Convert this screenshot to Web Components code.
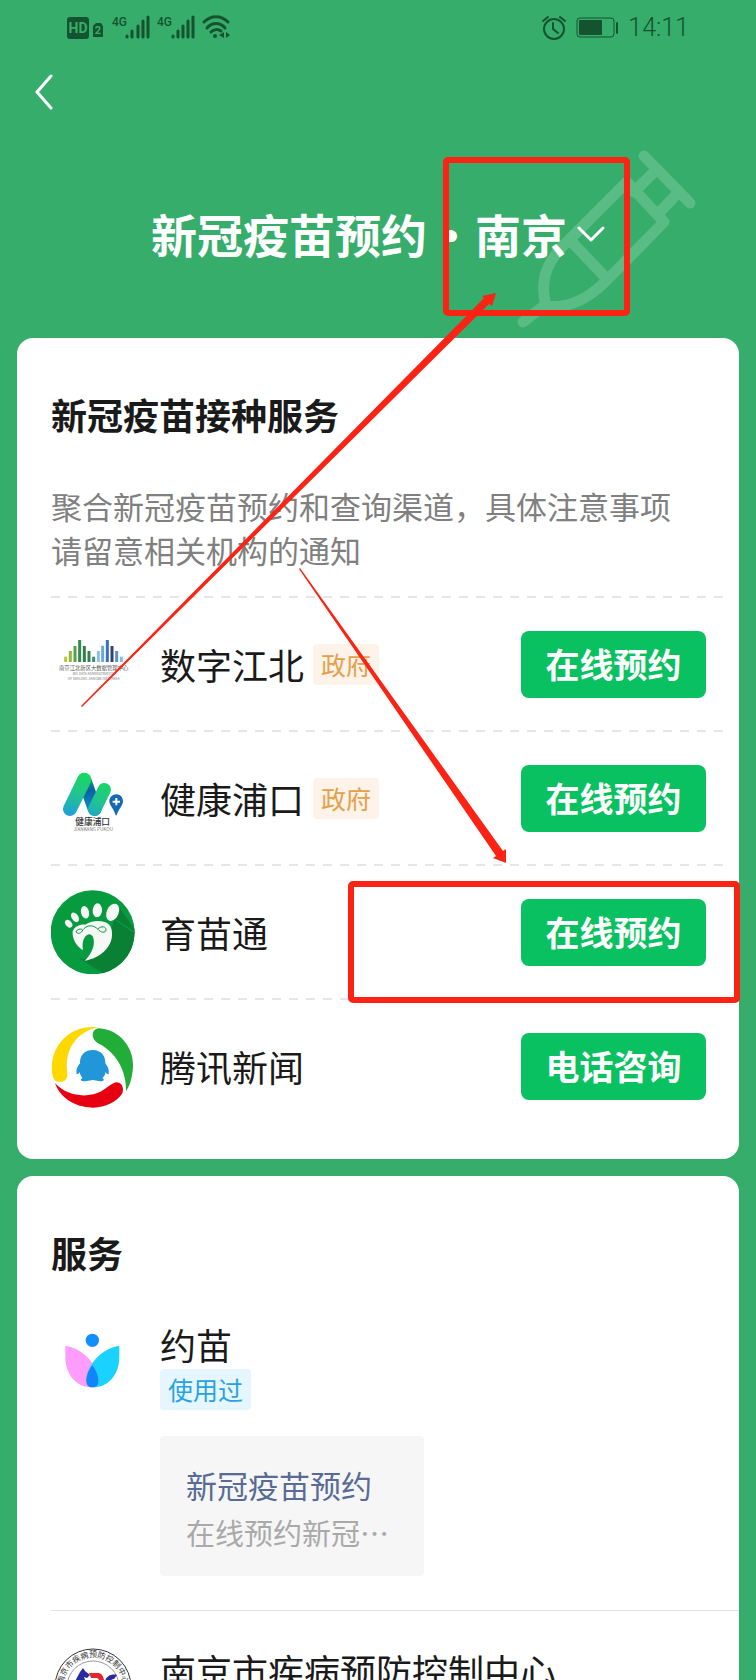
<!DOCTYPE html>
<html lang="zh-CN">
<head>
<meta charset="utf-8">
<meta name="viewport" content="width=device-width, initial-scale=1">
<title>新冠疫苗预约</title>
<style>
    body {
        margin: 0;
        background: #36ad6a;
        color: #1a1a1a;
        font-family: "Noto Sans CJK SC", "Noto Sans", sans-serif;
    }
</style>
</head>
<body>

<vaccine-app>
    <status-bar></status-bar>
    <page-header city="南京">新冠疫苗预约</page-header>

    <service-card heading="新冠疫苗接种服务">
        <p slot="intro">聚合新冠疫苗预约和查询渠道，具体注意事项请留意相关机构的通知</p>
        <booking-row name="数字江北" tag="政府" action="在线预约">
            <svg viewBox="63 66 252 252" aria-hidden="true">
                <g stroke-width="9">
                    <path stroke="#b5c934" d="M107 186V170"/>
                    <path stroke="#8dbb3c" d="M121 186V153"/>
                    <path stroke="#55a345" d="M135 186V138"/>
                    <path stroke="#35894a" d="M149 186V120"/>
                    <path stroke="#2f7d48" d="M163 186V138"/>
                    <path stroke="#36814a" d="M177 186V153"/>
                    <path stroke="#3c8f7b" d="M191 186V170"/>
                    <path stroke="#8cc0e6" d="M205 186V153"/>
                    <path stroke="#6ba9dc" d="M218 186V137"/>
                    <path stroke="#3b6fb5" d="M232 186V120"/>
                    <path stroke="#34416f" d="M246 186V138"/>
                    <path stroke="#5f8fc6" d="M260 186V153"/>
                    <path stroke="#86bce4" d="M274 186V170"/>
                </g>
                <g text-anchor="middle" fill="#555">
                    <text x="191" y="210" font-size="16">南京江北新区大数据管理中心</text>
                    <text x="191" y="226" font-size="10" fill="#777">BIG DATA ADMINISTRATION</text>
                    <text x="191" y="240" font-size="10" fill="#777">OF NANJING JIANGBEI NEW AREA</text>
                </g>
            </svg>
        </booking-row>
        <booking-row name="健康浦口" tag="政府" action="在线预约">
            <svg viewBox="63 48 252 252" aria-hidden="true">
                <defs>
                    <linearGradient id="leg" gradientUnits="userSpaceOnUse" x1="162" y1="98" x2="120" y2="228">
                        <stop offset="0" stop-color="#16d860"/>
                        <stop offset=".5" stop-color="#22c48e"/>
                        <stop offset="1" stop-color="#1d9fdc"/>
                    </linearGradient>
                    <linearGradient id="mid" gradientUnits="userSpaceOnUse" x1="165" y1="110" x2="190" y2="220">
                        <stop offset="0" stop-color="#12a070"/>
                        <stop offset=".4" stop-color="#0b62a4"/>
                        <stop offset="1" stop-color="#1796d4"/>
                    </linearGradient>
                </defs>
                <g fill="none" stroke-linecap="round">
                    <path d="M163 120L194 207" stroke="url(#mid)" stroke-width="42"/>
                    <path d="M163 119L120 207" stroke="url(#leg)" stroke-width="42"/>
                    <path d="M223 149L194 208" stroke="url(#leg)" stroke-width="40"/>
                </g>
                <path d="M259 163C271 163 279 172 279 184C279 196 266 207 260 226H257C252 207 238 196 238 184C238 172 247 163 259 163Z" fill="#1468b4"/>
                <path d="M259 174V196M248 185H270" stroke="#fff" stroke-width="6"/>
                <text x="188" y="256" font-size="26" font-weight="500" text-anchor="middle" fill="#333">健康浦口</text>
                <text x="190" y="274" font-size="14" text-anchor="middle" fill="#777">JIANKANG PUKOU</text>
            </svg>
        </booking-row>
        <booking-row name="育苗通" action="在线预约">
            <svg viewBox="63 60 252 252" aria-hidden="true">
                <circle cx="188" cy="187" r="126" fill="#079b40"/>
                <path d="M266 110L313 176A126 126 0 0 1 217 310L148 264L168 268L246 170Z" fill="#0a8034"/>
                <path d="M258 150L314 188" stroke="#079b40" stroke-width="4"/>
                <g fill="#f6f8f6">
                    <ellipse cx="248" cy="127" rx="18" ry="27" transform="rotate(24 248 127)"/>
                    <ellipse cx="202" cy="121" rx="14" ry="21" transform="rotate(4 202 121)"/>
                    <ellipse cx="165" cy="127" rx="12" ry="19" transform="rotate(-14 165 127)"/>
                    <ellipse cx="135" cy="142" rx="10" ry="16" transform="rotate(-32 135 142)"/>
                    <ellipse cx="116" cy="161" rx="9" ry="13" transform="rotate(-42 116 161)"/>
                    <path d="M128 184C134 168 152 162 166 164C182 152 206 150 224 156C240 161 247 174 246 194C246 230 212 264 164 272C186 250 196 226 190 204C186 192 178 190 170 196C158 206 156 224 159 241C138 228 126 206 128 184Z"/>
                </g>
                <g fill="none" stroke="#079b40" stroke-width="3">
                    <path d="M138 186C140 177 154 175 158 180C155 190 142 193 138 186ZM160 178C174 162 192 166 204 178C212 188 227 190 228 180C228 168 214 168 204 176"/>
                </g>
            </svg>
        </booking-row>
        <booking-row name="腾讯新闻" action="电话咨询">
            <svg viewBox="63 462 252 252" aria-hidden="true">
                <path d="M204 472C124 462 60 524 66 604C67 626 74 636 90 636C106 636 113 626 112 610C102 548 134 486 204 472Z" fill="#ffd800"/>
                <path d="M206 475C270 478 312 535 309 590C307 625 298 650 288 663C290 608 262 550 208 522C180 508 184 477 206 475Z" fill="#22ac38"/>
                <path d="M75 640C95 695 150 713 190 713C225 713 262 695 277 670C284 650 272 636 258 637C240 640 225 665 190 673C150 682 105 672 75 640Z" fill="#e60012"/>
                <path d="M188 540C216 540 227 560 226 580C234 590 238 600 236 612C232 614 229 610 227 606C226 615 222 620 217 624C226 629 220 635 210 634L189 630L165 634C152 634 148 629 158 624C152 618 150 612 149 606C146 612 142 614 140 612C137 600 142 590 150 580C149 558 162 540 188 540Z" fill="#2196d9"/>
            </svg>
        </booking-row>
    </service-card>

    <service-card heading="服务">
        <agency-row name="约苗" tag="使用过">
            <svg slot="icon" viewBox="63 327 252 252" aria-hidden="true">
                <circle cx="187" cy="391" r="20" fill="#128fff"/>
                <path d="M106 407C150 415 188 445 203 492C208 516 200 532 186 532C140 532 106 495 106 440Z" fill="#ff9dff"/>
                <path d="M268 407C224 415 186 445 171 492C166 516 174 532 188 532C234 532 268 495 268 440Z" fill="#1ad2ff"/>
                <path d="M187 466C197 480 205 495 205 512C205 526 198 532 187 532C176 532 169 526 169 512C169 495 177 480 187 466Z" fill="#1384fb"/>
            </svg>
            <quick-link href="#booking" label="新冠疫苗预约">在线预约新冠…</quick-link>
        </agency-row>
        <agency-row name="南京市疾病预防控制中心">
            <svg slot="icon" viewBox="0 0 84 84" aria-hidden="true">
                <circle cx="42" cy="42" r="38" fill="#fff" stroke="#333" stroke-width="1"/>
                <circle cx="42" cy="42" r="26" fill="none" stroke="#999" stroke-width="1"/>
                <path id="ring" d="M13 50A30 30 0 1 1 71 50" fill="none"/>
                <text font-size="8" fill="#333" text-anchor="middle"><textPath href="#ring" startOffset="50%">南京市疾病预防控制中心</textPath></text>
                <path d="M20 44L29 27L32 23L34 26L39 30L36 33L33 32L36 40L44 44L40 50L34 46L28 54L24 52L27 44L22 48Z" fill="#2a2aa0"/>
                <path d="M38 28H48C55 30 55 44 47 46H40L42 41H46C49 39 49 34 46 33H40Z" fill="#e5262c"/>
                <path d="M66 30C58 28 52 34 54 42C56 46 62 46 66 43L63 39C58 41 58 34 63 34Z" fill="#2a2aa0"/>
            </svg>
        </agency-row>
    </service-card>

    <callout-layer></callout-layer>
</vaccine-app>

<script>
// Attach an open root and fill it from a markup string
function render(el, html) {
    const template = document.createElement('template');
    template.innerHTML = html;
    el.attachShadow({ mode: 'open' }).appendChild(template.content.cloneNode(true));
}

class VaccineApp extends HTMLElement {
    constructor() {
        super();
        render(this, `
            <style>
                :host {
                    display: block;
                    position: relative;
                    height: 100vh;
                    overflow: hidden auto;
                    scrollbar-width: none;
                }
                main {
                    display: flex;
                    flex-direction: column;
                }
            </style>
            <main><slot></slot></main>
        `);
    }
}

class StatusBar extends HTMLElement {
    constructor() {
        super();
        render(this, `
            <style>
                :host {
                    display: flex;
                    justify-content: space-between;
                    align-items: center;
                    height: 56px;
                    padding: 0 67px 0 66px;
                    color: #14532f;
                }
                svg {
                    display: block;
                    fill: currentColor;
                }
                div {
                    display: flex;
                    align-items: center;
                    gap: 10px;
                }
                time {
                    font: 300 25px/30px Roboto, sans-serif;
                }
            </style>
            <svg width="166" height="26" viewBox="66 15 166 26" font-family="Roboto, sans-serif">
                <rect x="67" y="17" width="22" height="22" rx="3"/>
                <text x="78" y="33" font-size="14" font-weight="700" text-anchor="middle" fill="#36ad6a">HD</text>
                <path d="M96 23H101L103 26V37H93V26Z"/>
                <text x="98" y="34" font-size="11" font-weight="700" text-anchor="middle" fill="#36ad6a">2</text>
                <text x="112" y="26" font-size="12" font-weight="500">4G</text>
                <text x="157" y="26" font-size="12" font-weight="500">4G</text>
                <g fill="none" stroke="currentColor" stroke-width="3" stroke-linecap="round">
                    <path d="M127 36V37M132 31V37M138 26V37M143 21V37M148 17V37"/>
                    <path d="M173 36V37M178 31V37M183 26V37M188 21V37M193 17V37"/>
                    <path d="M204 22C211 15 221 15 228 22M207 28C212 22 220 22 225 28M211 32C214 29 218 29 221 31"/>
                </g>
                <circle cx="215" cy="36" r="2"/>
                <path d="M224 32V38L219 35ZM226 32V38L230 35Z"/>
            </svg>
            <div>
                <svg width="76" height="26" viewBox="542 15 76 26">
                    <g fill="none" stroke="currentColor" stroke-width="2">
                        <circle cx="554" cy="29" r="10"/>
                        <path d="M553 23V29L558 33M543 21L548 17M565 21L560 17" stroke-linecap="round"/>
                        <rect x="577" y="18" width="37" height="19" rx="3" stroke-width="1"/>
                    </g>
                    <rect x="579" y="20" width="23" height="15" rx="1"/>
                    <rect x="616" y="22" width="2" height="12" rx="1"/>
                </svg>
                <time>14:11</time>
            </div>
        `);
    }
}

class PageHeader extends HTMLElement {
    constructor() {
        super();
        render(this, `
            <style>
                :host {
                    display: block;
                    position: relative;
                    height: 282px;
                    color: #fff;
                }
                button {
                    border: 0;
                    padding: 0;
                    background: none;
                    color: inherit;
                    font: inherit;
                    cursor: pointer;
                }
                .back {
                    display: block;
                    margin-left: 25px;
                    padding: 17px 10px;
                }
                svg {
                    display: block;
                    fill: none;
                    stroke: currentColor;
                    stroke-linecap: round;
                    stroke-linejoin: round;
                }
                .syringe {
                    position: absolute;
                    top: 93px;
                    right: 58px;
                    opacity: .18;
                }
                h1 {
                    position: relative;
                    display: flex;
                    justify-content: center;
                    margin: 73px 0 0;
                    font-size: 46px;
                    line-height: 64px;
                    font-weight: 700;
                }
                i {
                    width: 48px;
                    font-style: normal;
                    text-align: center;
                }
                .city {
                    display: flex;
                    align-items: center;
                    gap: 10px;
                }
            </style>
            <svg class="syringe" width="182" height="184" viewBox="516 148 182 184" stroke-width="11">
                <path d="M644 155L690 202M652 173L634 191M676 194L659 212M627 181L664 221L606 280C588 298 568 308 546 305C540 282 544 262 568 240L627 181M570 239L606 277M545 304L523 321"/>
            </svg>
            <button class="back" aria-label="返回">
                <svg width="18" height="38" viewBox="0 0 18 38" stroke-width="3"><path d="M16 3L2 19L16 35"/></svg>
            </button>
            <h1>
                <slot></slot><i>·</i>
                <button class="city">
                    <span></span>
                    <svg width="28" height="22" viewBox="0 0 28 22" stroke-width="3"><path d="M2 6L14 18L26 6"/></svg>
                </button>
            </h1>
        `);
        this.shadowRoot.querySelector('.city span').textContent = this.getAttribute('city');
    }
}

class ServiceCard extends HTMLElement {
    constructor() {
        super();
        render(this, `
            <style>
                :host {
                    display: block;
                    margin: 0 17px 17px;
                    padding: 50px 0 27px 34px;
                    border-radius: 16px;
                    background: #fff;
                }
                h2 {
                    margin: 0 0 7px;
                    font-size: 36px;
                    line-height: 52px;
                    font-weight: 700;
                }
                ::slotted(p) {
                    margin: 44px 42px 24px 0;
                    color: #808080;
                    font-size: 31px;
                    line-height: 44px;
                }
            </style>
            <h2></h2>
            <slot name="intro"></slot>
            <slot></slot>
        `);
        this.shadowRoot.querySelector('h2').textContent = this.getAttribute('heading');
    }
}

class InfoTag extends HTMLElement {
    constructor() {
        super();
        render(this, `
            <style>
                :host {
                    display: block;
                    width: fit-content;
                    padding: 0 8px;
                    border-radius: 4px;
                    background: #fdf3e8;
                    color: #e5a04c;
                    font-size: 25px;
                    line-height: 41px;
                }
                :host([kind="used"]) {
                    background: #e6f6fe;
                    color: #27a3e2;
                }
            </style>
            <slot></slot>
        `);
    }
}

class BookingRow extends HTMLElement {
    constructor() {
        super();
        render(this, `
            <style>
                :host {
                    display: flex;
                    align-items: center;
                    box-sizing: border-box;
                    height: 134px;
                    padding: 2px 33px 0 0;
                    background: repeating-linear-gradient(90deg, #e6e6e6 0 9px, transparent 9px 17px) 0 0 / calc(100% - 8px) 2px no-repeat;
                }
                ::slotted(svg) {
                    width: 84px;
                    height: 84px;
                    margin-right: 25px;
                }
                span {
                    margin-right: 9px;
                    font-size: 36px;
                    line-height: 50px;
                }
                button {
                    min-width: 185px;
                    height: 67px;
                    margin-left: auto;
                    padding: 0 20px;
                    border: 0;
                    border-radius: 8px;
                    background: #09c160;
                    color: #fff;
                    font: inherit;
                    font-size: 34px;
                    font-weight: 700;
                    line-height: 48px;
                    cursor: pointer;
                }
            </style>
            <slot></slot>
            <span></span>
            <info-tag></info-tag>
            <button></button>
        `);
        const root = this.shadowRoot;
        root.querySelector('span').textContent = this.getAttribute('name');
        root.querySelector('button').textContent = this.getAttribute('action');
        const tag = root.querySelector('info-tag');
        if (this.hasAttribute('tag')) {
            tag.textContent = this.getAttribute('tag');
        } else {
            tag.remove();
        }
    }
}

class AgencyRow extends HTMLElement {
    constructor() {
        super();
        render(this, `
            <style>
                :host {
                    display: grid;
                    grid-template-columns: 84px 1fr;
                    column-gap: 25px;
                    padding: 34px 0;
                }
                :host(:not(:last-child)) {
                    border-bottom: 1px solid #e2e2e2;
                }
                ::slotted(svg) {
                    width: 84px;
                    height: 84px;
                }
                h3 {
                    margin: 0;
                    font-size: 36px;
                    line-height: 50px;
                    font-weight: 400;
                }
            </style>
            <slot name="icon"></slot>
            <div>
                <h3></h3>
                <info-tag kind="used"></info-tag>
                <slot></slot>
            </div>
        `);
        const root = this.shadowRoot;
        root.querySelector('h3').textContent = this.getAttribute('name');
        const tag = root.querySelector('info-tag');
        if (this.hasAttribute('tag')) {
            tag.textContent = this.getAttribute('tag');
        } else {
            tag.remove();
        }
    }
}

class QuickLink extends HTMLElement {
    constructor() {
        super();
        render(this, `
            <style>
                :host {
                    display: block;
                    margin-top: 26px;
                }
                a {
                    display: block;
                    width: fit-content;
                    padding: 24px 35px 22px 26px;
                    border-radius: 4px;
                    background: #f6f6f6;
                    color: #a9a9a9;
                    font-size: 29px;
                    line-height: 44px;
                    text-decoration: none;
                }
                strong {
                    display: block;
                    color: #576b95;
                    font-size: 31px;
                    line-height: 50px;
                    font-weight: 400;
                }
            </style>
            <a><strong></strong><slot></slot></a>
        `);
        this.shadowRoot.querySelector('a').href = this.getAttribute('href');
        this.shadowRoot.querySelector('strong').textContent = this.getAttribute('label');
    }
}

// Red boxes and arrows that point at the city picker and the booking button
class CalloutLayer extends HTMLElement {
    constructor() {
        super();
        render(this, `
            <style>
                :host {
                    position: absolute;
                    top: 0;
                    left: 0;
                    width: 100%;
                    pointer-events: none;
                }
                svg {
                    display: block;
                    width: 100%;
                }
            </style>
            <svg viewBox="0 0 756 1680" fill="#fa2314" aria-hidden="true">
                <g fill="none" stroke="#fa2314" stroke-width="6" stroke-linejoin="round">
                    <rect x="446" y="160" width="181" height="153" rx="2"/>
                    <rect x="351" y="884" width="386" height="116" rx="2"/>
                </g>
                <path d="M81 706L484 298L482 296L496 293L492 306L489 304L82 707Z"/>
                <path d="M300 568L503 851L506 849L506 863L493 858L496 856L299 569Z"/>
            </svg>
        `);
    }
}

customElements.define('info-tag', InfoTag);
customElements.define('vaccine-app', VaccineApp);
customElements.define('status-bar', StatusBar);
customElements.define('page-header', PageHeader);
customElements.define('service-card', ServiceCard);
customElements.define('booking-row', BookingRow);
customElements.define('quick-link', QuickLink);
customElements.define('agency-row', AgencyRow);
customElements.define('callout-layer', CalloutLayer);
</script>
</body>
</html>
